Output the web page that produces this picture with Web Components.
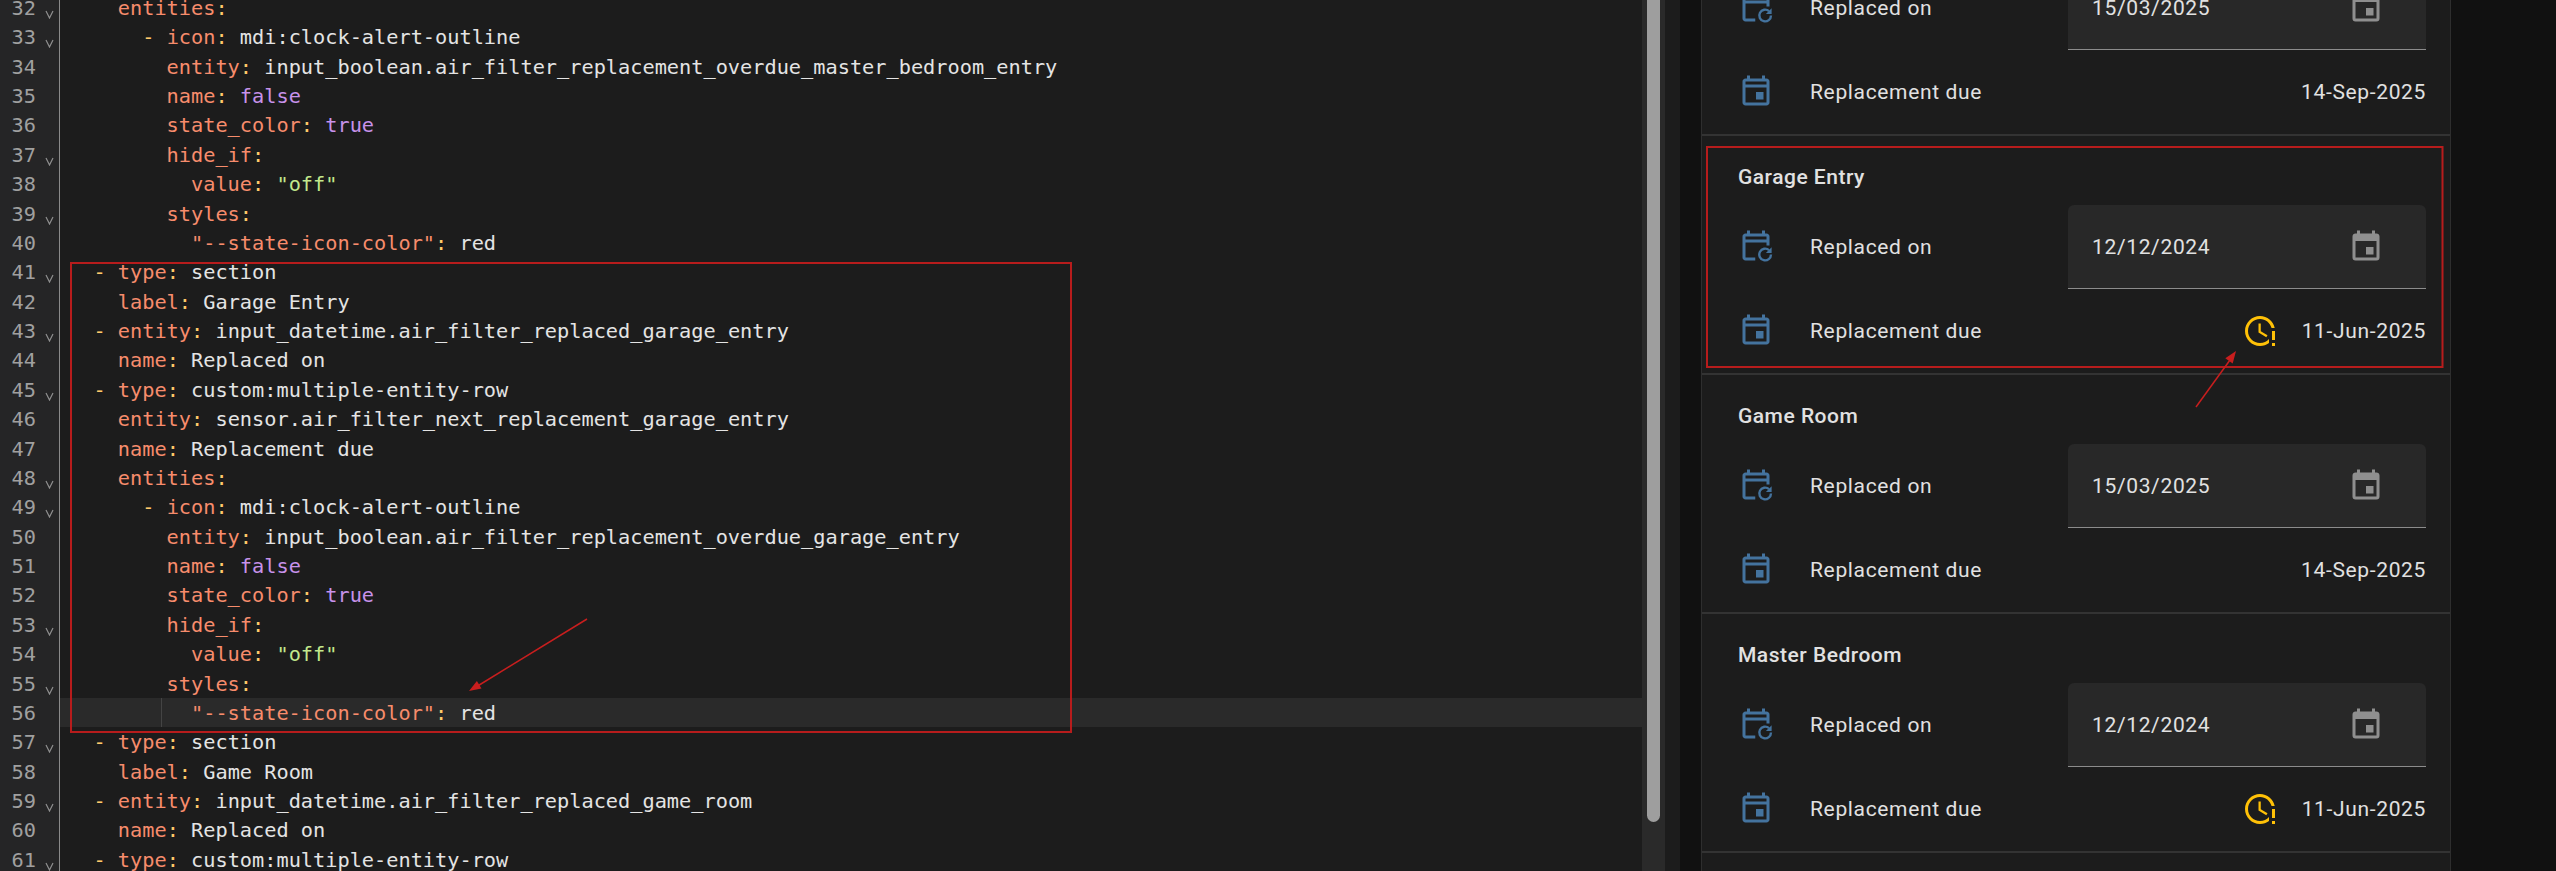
<!DOCTYPE html>
<html><head><meta charset="utf-8"><style>
html,body{margin:0;padding:0;background:#111;overflow:hidden}
</style></head><body>
<filter-page>
<code-editor>
<code-line n="32" fold>    entities:</code-line>
<code-line n="33" fold>      - icon: mdi:clock-alert-outline</code-line>
<code-line n="34">        entity: input_boolean.air_filter_replacement_overdue_master_bedroom_entry</code-line>
<code-line n="35">        name: false</code-line>
<code-line n="36">        state_color: true</code-line>
<code-line n="37" fold>        hide_if:</code-line>
<code-line n="38">          value: "off"</code-line>
<code-line n="39" fold>        styles:</code-line>
<code-line n="40">          "--state-icon-color": red</code-line>
<code-line n="41" fold>  - type: section</code-line>
<code-line n="42">    label: Garage Entry</code-line>
<code-line n="43" fold>  - entity: input_datetime.air_filter_replaced_garage_entry</code-line>
<code-line n="44">    name: Replaced on</code-line>
<code-line n="45" fold>  - type: custom:multiple-entity-row</code-line>
<code-line n="46">    entity: sensor.air_filter_next_replacement_garage_entry</code-line>
<code-line n="47">    name: Replacement due</code-line>
<code-line n="48" fold>    entities:</code-line>
<code-line n="49" fold>      - icon: mdi:clock-alert-outline</code-line>
<code-line n="50">        entity: input_boolean.air_filter_replacement_overdue_garage_entry</code-line>
<code-line n="51">        name: false</code-line>
<code-line n="52">        state_color: true</code-line>
<code-line n="53" fold>        hide_if:</code-line>
<code-line n="54">          value: "off"</code-line>
<code-line n="55" fold>        styles:</code-line>
<code-line n="56" active>          "--state-icon-color": red</code-line>
<code-line n="57" fold>  - type: section</code-line>
<code-line n="58">    label: Game Room</code-line>
<code-line n="59" fold>  - entity: input_datetime.air_filter_replaced_game_room</code-line>
<code-line n="60">    name: Replaced on</code-line>
<code-line n="61" fold>  - type: custom:multiple-entity-row</code-line>
</code-editor>
<filter-card>
<filter-section partial>
  <date-row date="15/03/2025">Replaced on</date-row>
  <due-row date="14-Sep-2025">Replacement due</due-row>
</filter-section>
<filter-section title="Garage Entry">
  <date-row date="12/12/2024">Replaced on</date-row>
  <due-row date="11-Jun-2025" alert>Replacement due</due-row>
</filter-section>
<filter-section title="Game Room">
  <date-row date="15/03/2025">Replaced on</date-row>
  <due-row date="14-Sep-2025">Replacement due</due-row>
</filter-section>
<filter-section title="Master Bedroom">
  <date-row date="12/12/2024">Replaced on</date-row>
  <due-row date="11-Jun-2025" alert>Replacement due</due-row>
</filter-section>
</filter-card>
<mark-ups></mark-ups>
</filter-page>
<script>
const P={
 today:'M19 3H18V1H16V3H8V1H6V3H5C3.9 3 3 3.9 3 5V19C3 20.1 3.9 21 5 21H19C20.1 21 21 20.1 21 19V5C21 3.9 20.1 3 19 3M19 5V7H5V5H19M5 19V9H19V19H5M12 12H17V17H12Z',
 refresh:'M19 3H18V1H16V3H8V1H6V3H5C3.9 3 3 3.9 3 5V19C3 20.1 3.9 21 5 21H11.5V19H5V9H19V11H21V5C21 3.9 20.1 3 19 3M19 7H5V5H19V7Z',
 cal:'M19,19H5V8H19M16,1V3H8V1H6V3H5C3.89,3 3,3.89 3,5V19A2,2 0 0,0 5,21H19A2,2 0 0,0 21,19V5C21,3.89 20.1,3 19,3H18V1M17,12H12V17H17V12Z',
 clock:'M11 7V13L16.2 16.1L17 14.9L12.5 12.2V7H11M20 12V18H22V12H20M20 20V22H22V20H20M18 20C16.3 21.3 14.3 22 12 22C6.5 22 2 17.5 2 12S6.5 2 12 2C16.8 2 20.9 5.4 21.8 10H19.7C18.8 6.6 15.7 4 12 4C7.6 4 4 7.6 4 12S7.6 20 12 20C14.4 20 16.5 18.9 18 17.3V20Z'
};
const icon=(d,c,extra='')=>`<svg width="36" height="36" viewBox="0 0 24 24" fill="${c}" style="display:block;flex:none"><path d="${d}"/>${extra}</svg>`;
function def(name,html){customElements.define(name,class extends HTMLElement{
  constructor(){super();this.attachShadow({mode:'open'});}
  connectedCallback(){this.shadowRoot.innerHTML=typeof html==='function'?html(this):html;}
});}
const esc=s=>s.replace(/&/g,'&amp;').replace(/</g,'&lt;');
function tokens(t){
  const m=t.match(/^(\s*)(- )?("[^"]*"|[\w]+):( (.*))?$/);
  if(!m) return esc(t);
  let o=m[1];
  if(m[2]) o+=`<span class="d">- </span>`;
  o+=`<span class="k">${esc(m[3])}</span><span class="c">:</span>`;
  if(m[4]){
    const v=m[5];let cl='v';
    if(v==='true'||v==='false')cl='b'; else if(v[0]==='"')cl='s';
    o+=` <span class="${cl}">${esc(v)}</span>`;
  }
  return o;
}
def('filter-page',`<style>
:host{display:flex;position:relative;width:2556px;height:871px;overflow:hidden;background:#111}
</style><slot></slot>`);
def('code-editor',`<style>
:host{display:flex;flex:none;width:1680px;height:871px;background:#1c1c1c;overflow:hidden}
.main{flex:1;min-width:0;position:relative;overflow:hidden;background:linear-gradient(90deg,#252526 0,#252526 59px,#8a8a8a 59px,#8a8a8a 60px,transparent 60px)}
.lines{margin-top:-7.1px}
.track{flex:none;width:13px;padding:0 5px;height:871px;background:#2a2a2a}
.thumb{height:822px;background:#9e9e9e;border-radius:0 0 7px 7px}
.rest{flex:none;width:15px}
</style><div class="main"><div class="lines"><slot></slot></div></div><div class="track"><div class="thumb"></div></div><div class="rest"></div>`);
def('code-line',el=>`<style>
:host{display:flex;height:29.38px;font:20.27px/31px "DejaVu Sans Mono",monospace;white-space:pre;color:#e4e4e4}
.g{flex:none;width:60px;position:relative;color:#a0a0a0}
.n{position:absolute;left:0;width:36px;text-align:right}
svg{position:absolute;left:45px;top:17px}
.t{flex:1;padding-left:9px;position:relative}
:host([active]) .t{background:#2a2a2a}
:host([active]) .t::before{content:"";position:absolute;left:101px;top:0;bottom:0;width:1px;background:#444}
.k{color:#f78c6c}.d{color:#ffcb6b}.c{color:#ffcb6b}.v{color:#e4e4e4}.b{color:#c792ea}.s{color:#c3e88d}
</style><div class="g"><span class="n">${el.getAttribute('n')}</span>${el.hasAttribute('fold')?'<svg width="9" height="9" viewBox="0 0 9 9"><path d="M1 1L4.5 8L8 1" fill="none" stroke="#8f8f8f" stroke-width="1.2"/></svg>':''}</div><div class="t">${tokens(el.textContent)}</div>`);
def('filter-card',`<style>
:host{display:block;flex:none;box-sizing:border-box;width:750px;height:871px;margin-left:21px;background:#1c1c1c;border:solid #2e2e2e;border-width:0 1px;overflow:hidden;color:#e1e1e1;font-family:Roboto,sans-serif}
.s{margin-top:-34px;padding:0 24px}
</style><div class="s"><slot></slot></div>`);
def('filter-section',el=>`<style>
:host{display:block;margin:0 -24px;padding:0 24px 12px;border-bottom:2px solid #333}
.t{height:69px;box-sizing:border-box;padding:26px 0 0 12px;font-size:21px;font-weight:500;line-height:30px;letter-spacing:.5px}
.rows{display:flex;flex-direction:column;gap:12px}
</style>${el.hasAttribute('partial')?'':`<div class="t">${el.getAttribute('title')}</div>`}<div class="rows"><slot></slot></div>`);
def('date-row',el=>`<style>
:host{display:flex;align-items:center;height:84px;font-size:21px;letter-spacing:.65px}
.i{width:60px;display:flex;justify-content:center;flex:none}
.l{flex:1;margin-left:24px}
.f{flex:none;box-sizing:border-box;width:358px;height:84px;display:flex;align-items:center;justify-content:space-between;padding:0 42px 0 24px;background:#282828;border-radius:6px 6px 0 0;border-bottom:1.5px solid #8c8c8c}
</style><div class="i">${icon(P.refresh,'#44739e','<path d="M22 17a3.9 3.9 0 1 1-1.3-2.9" fill="none" stroke="#44739e" stroke-width="1.6"/><path d="M22.4 12.2V16h-3.8Z" fill="#44739e"/>')}</div><div class="l"><slot></slot></div><div class="f"><span>${el.getAttribute('date')}</span>${icon(P.cal,'#8f8f8f')}</div>`);
def('due-row',el=>`<style>
:host{display:flex;align-items:center;height:60px;font-size:21px;letter-spacing:.65px}
.i{width:60px;display:flex;justify-content:center;flex:none}
.l{flex:1;margin-left:24px}
.a{margin-right:24px}
</style><div class="i">${icon(P.today,'#44739e')}</div><div class="l"><slot></slot></div>${el.hasAttribute('alert')?`<div class="a">${icon(P.clock,'#ffc107')}</div>`:''}<span>${el.getAttribute('date')}</span>`);
def('mark-ups',`<style>
:host{position:absolute;inset:0;pointer-events:none}
svg{position:absolute;left:0;top:0}
</style><svg width="2556" height="871" fill="none" stroke="#b71c1c" stroke-width="2">
<rect x="71" y="263" width="1000" height="469"/>
<rect x="1707" y="147" width="735.5" height="220"/>
<path d="M587 619L476 687" stroke="#c81e1e" stroke-width="1.5"/><polygon points="469,691 481.5,688.6 476.9,680.9" fill="#c81e1e" stroke="none"/>
<path d="M2196 407L2230 360" stroke="#c81e1e" stroke-width="1.5"/><polygon points="2236,351 2232.7,363.4 2225.3,358.2" fill="#c81e1e" stroke="none"/>
</svg>`);
</script>
</body></html>
